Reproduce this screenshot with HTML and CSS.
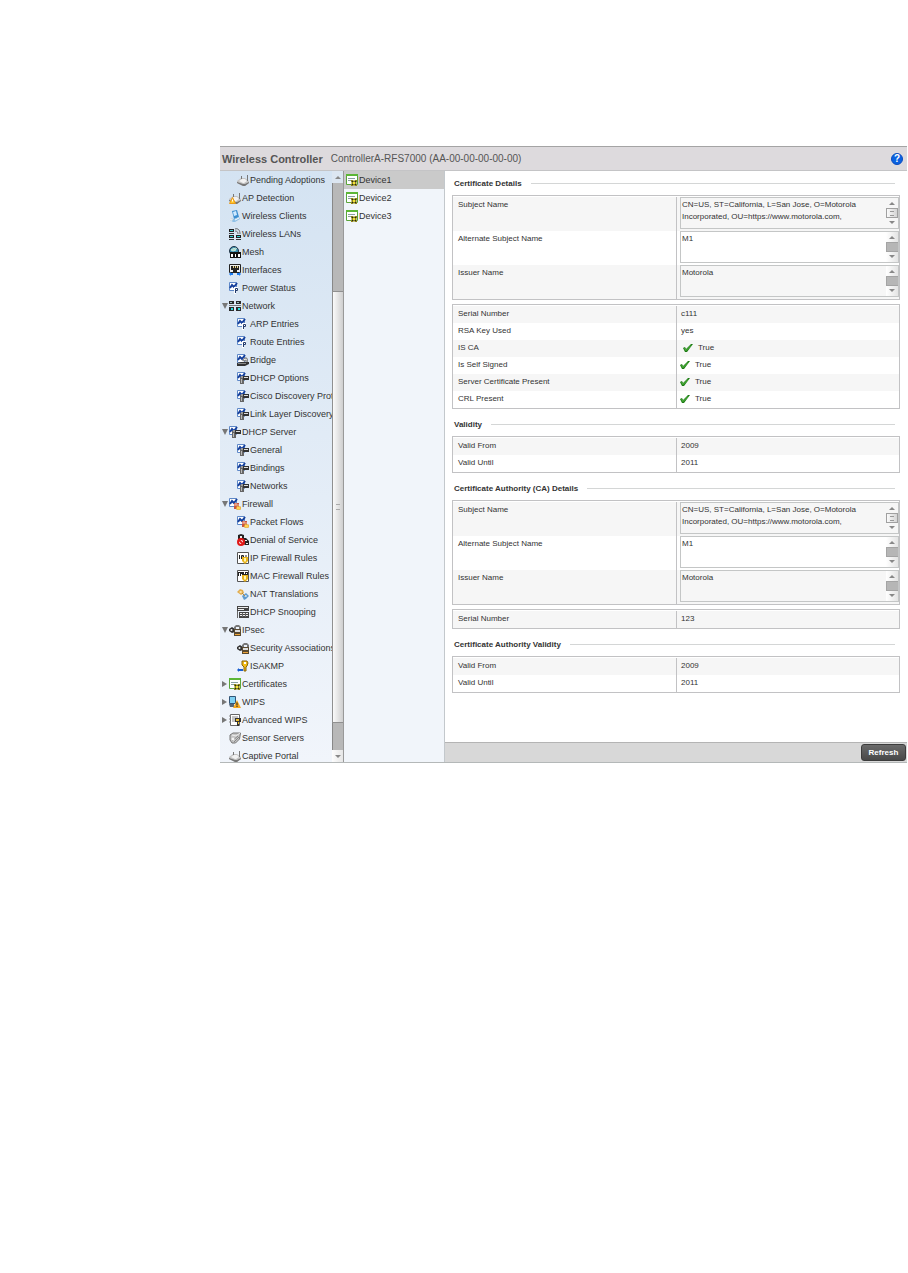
FILE: index.html
```html
<!DOCTYPE html>
<html lang="en">
<head>
    <meta charset="UTF-8">
    <meta name="viewport" content="width=device-width, initial-scale=1.0">
    <title>Wireless Controller</title>
    <link rel="stylesheet" href="styles.css">
</head>
<body>

    <svg class="sprite" aria-hidden="true">
        <symbol id="ap" viewBox="0 0 12 12">
            <path d="M0 7l4-3h4l4 3v2l-4 3H6L0 9z" fill="#c4c4c4"/>
            <path d="M0 9l6 3h2l4-3v-1l-4 2H6L0 8z" fill="#777"/>
            <path d="M2 7l3-2h3l2 2-3 2H6z" fill="#f2f2f2"/>
            <path d="M4.500 2v3M10.500 1v6" stroke="#777"/>
        </symbol>
        <symbol id="ap-warn" viewBox="0 0 12 12">
            <use href="#ap"/>
            <path d="M3.500 5.500L6.500 11.500H.500z" fill="#ffc62b" stroke="#ea9a1c"/>
            <path d="M3.500 7.500v2" stroke="#fff"/>
        </symbol>
        <symbol id="client" viewBox="0 0 12 12">
            <path d="M3 1l5-1 2 7-5 2z" fill="#3d8fd0"/>
            <path d="M4 2l3-1 1 4-3 1z" fill="#cfeaff"/>
            <path d="M1 8l4 1 5-2 1 2-5 3H4L1 10z" fill="#8fc0e6"/>
            <path d="M1 8l3 1-1 2-2-1z" fill="#e8e8e8"/>
            <path d="M6 10l4-2" stroke="#fff"/>
        </symbol>
        <symbol id="wlan" viewBox="0 0 12 12">
            <path d="M0 1h5v3H0zM0 7h5v3H0zM7 7h5v3H7z" fill="#222"/>
            <path d="M1 2h3v1H1zM1 8h3v1H1zM8 8h3v1H8z" fill="#2fd3d3"/>
            <path d="M0 5.500h5M0 11.500h5M7 11.500h5" stroke="#333"/>
            <path d="M6 1c3-1 5 1 5 5M6 3c2 0 3 1 3 3" fill="none" stroke="#666"/>
        </symbol>
        <symbol id="mesh" viewBox="0 0 12 12">
            <circle cx="5" cy="5" r="4.500" fill="#3a8fb0" stroke="#234"/>
            <path d="M2 4l3-2 2 2-3 1zM6 2l2 1" fill="#a8dccc" stroke="#c6e6d8"/>
            <path d="M1 6h11v6H1z" fill="#111"/>
            <path d="M2 8h2v3H2zM6 8h1v3H6zM9 8h2v3H9z" fill="#fff"/>
        </symbol>
        <symbol id="iface" viewBox="0 0 12 12">
            <path d="M.500.500h11v8H.500z" fill="#eee" stroke="#222"/>
            <path d="M2 2h8v4H8v2H4V6H2z" fill="#222"/>
            <path d="M4 2h1v2H4zM6 2h1v2H6zM8 2h1v2H8z" fill="#e8d48a"/>
            <path d="M0 10l2-2v1h2v2H2v1zM12 10l-2-2v1H8v2h2v1z" fill="#1a7af0"/>
        </symbol>
        <symbol id="chart" viewBox="0 0 12 12">
            <path d="M.500.500h7v8h-7z" fill="#fff" stroke="#5e88c8"/>
            <path d="M1 6l2-3 2 2 3-4" fill="none" stroke="#16409c" stroke-width="2"/>
        </symbol>
        <symbol id="chart-p" viewBox="0 0 12 12">
            <use href="#chart"/>
            <path d="M5 5h4v4H7v3H5z" fill="#fff"/>
            <path d="M6.500 11V6.500h2v2h-2" fill="none" stroke="#223a6a"/>
        </symbol>
        <symbol id="chart-plug" viewBox="0 0 12 12">
            <use href="#chart"/>
            <path d="M3 5h4v7H3z" fill="#666"/>
            <path d="M4 4h3v2H4z" fill="#999"/>
            <path d="M6 4h6v4H6z" fill="#333"/>
            <path d="M7 5.500h4" stroke="#ddd"/>
            <path d="M4.500 7v4" stroke="#bbb"/>
        </symbol>
        <symbol id="network" viewBox="0 0 12 12">
            <path d="M0 1h5v3H0zM7 1h5v3H7zM0 7h5v4H0zM7 7h5v4H7z" fill="#2a2a2a"/>
            <path d="M1 2h2v1H1zM8 2h2v1H8z" fill="#9bb"/>
            <path d="M2 8h2v2H2zM9 8h2v2H9z" fill="#27e0e0"/>
            <path d="M0 5.500h12" stroke="#777"/>
        </symbol>
        <symbol id="bridge" viewBox="0 0 12 12">
            <use href="#chart"/>
            <path d="M5 7l2-3 2-1 2 2v3z" fill="#888"/>
            <path d="M7 6l1-1 2 1" fill="none" stroke="#eee"/>
            <path d="M0 9l4-1h8v2l-4 2H0z" fill="#333"/>
            <path d="M1 9.500h8" stroke="#888"/>
        </symbol>
        <symbol id="chart-fire" viewBox="0 0 12 12">
            <use href="#chart"/>
            <path d="M5 5h5v6H5z" fill="#c9543f"/>
            <path d="M5 7h5M7 5v2" stroke="#f3c1ad"/>
            <path d="M8 8l4 1v2l-2 1-3-1z" fill="#ffd257" stroke="#d48a1c" stroke-width=".500"/>
        </symbol>
        <symbol id="denial" viewBox="0 0 12 12">
            <path d="M1 1l3-1 3 1v3h2l3 3v4H8L1 5z" fill="#222"/>
            <path d="M3 2h2v2H3zM8 6h2v1H8zM9 9h2v1H9z" fill="#eee"/>
            <circle cx="4" cy="8" r="3" fill="#fff" stroke="#e01818" stroke-width="2"/>
            <path d="M2 6l4 4" stroke="#e01818" stroke-width="2"/>
        </symbol>
        <symbol id="iprules" viewBox="0 0 12 12">
            <path d="M.500.500h11v11H.500z" fill="#fff" stroke="#555"/>
            <path d="M2.500 3v4M4.500 7V3.500h2V5h-2M8 4h2" fill="none" stroke="#222"/>
            <path d="M5 5h6v4l-3 3-3-3z" fill="#e8b41c"/>
            <path d="M7 6h2v3l-1 1-1-1z" fill="#fff3b0"/>
        </symbol>
        <symbol id="macrules" viewBox="0 0 12 12">
            <path d="M.500.500h11v11H.500z" fill="#fff" stroke="#555"/>
            <path d="M1 2h10v4H1z" fill="#222"/>
            <path d="M2.500 3v3M4.500 4v2M7.500 2v2M9.500 3v1" stroke="#fff"/>
            <path d="M5 5h6v4l-3 3-3-3z" fill="#e8b41c"/>
            <path d="M7 6h2v3l-1 1-1-1z" fill="#fff3b0"/>
        </symbol>
        <symbol id="nat" viewBox="0 0 12 12">
            <path d="M0 4l3-3 3 1 1 3-3 2z" fill="#e2ad4e"/>
            <path d="M2 4l2-1 1 1-1 1z" fill="#fff0c8"/>
            <path d="M5 8l4-3 3 3-3 3-2 1z" fill="#5f9bcf"/>
            <path d="M7 8l2-1 1 1-1 1z" fill="#e0f0ff"/>
            <path d="M5 5l3 3" stroke="#b98a3d"/>
        </symbol>
        <symbol id="snoop" viewBox="0 0 12 12">
            <path d="M0 0h12v5H0zM2 6h10v6H2z" fill="#444"/>
            <path d="M1 1.500h10M1 3.500h6M3 7.500h8M3 9.500h8" stroke="#eee"/>
            <path d="M5.500 7v4M8.500 7v4M.500 5v7" stroke="#666"/>
        </symbol>
        <symbol id="ipsec" viewBox="0 0 12 12">
            <path d="M0 5l3-2 3 2v3l-3 1-3-2z" fill="#333"/>
            <circle cx="2.500" cy="6" r="1" fill="#eee"/>
            <path d="M5 6V3l2-2h3l2 2v3h-2V3H7v3z" fill="#777"/>
            <path d="M5 5h7v7H5z" fill="#5a4a30"/>
            <path d="M6 6h5v2H6z" fill="#ddd"/>
            <path d="M6 10.500h5" stroke="#eda43a"/>
        </symbol>
        <symbol id="key" viewBox="0 0 12 12">
            <path d="M5 1h5l1 2-1 3-1 1v4H7V7L5 5z" fill="#f2bd18" stroke="#8b6508"/>
            <path d="M7 2h2v2H7z" fill="#fff"/>
            <path d="M0 10l2-2v1h4v2H2v1z" fill="#1a5fd0"/>
        </symbol>
        <symbol id="cert" viewBox="0 0 12 12">
            <path d="M.500.500h11v10H.500z" fill="#fff" stroke="#5aa53a"/>
            <path d="M0 1h12" stroke="#5cb636" stroke-width="2"/>
            <path d="M2 4.500h7M2 6.500h5" stroke="#8aa0a0"/>
            <path d="M5 6h2l1 1 1-1h2v2l-1 1 1 1v2H9l-1-1-1 1H5v-2l1-1-1-1z" fill="#8c8418"/>
            <path d="M6 7l4 4M10 7l-4 4" stroke="#222"/>
            <path d="M7 8h2v2H7z" fill="#f2e23a"/>
        </symbol>
        <symbol id="wips" viewBox="0 0 12 12">
            <path d="M.500.500h6v7h-6z" fill="#7fd0f2" stroke="#357"/>
            <path d="M0 8h5v3H1z" fill="#567"/>
            <path d="M8 4l4 8H4z" fill="#f5a81c"/>
            <path d="M8 6.500v3M8 10v1" stroke="#222"/>
        </symbol>
        <symbol id="awips" viewBox="0 0 12 12">
            <path d="M1.500.500h9v11h-9z" fill="#fff" stroke="#666"/>
            <path d="M3 3h6M3 5h3M3 7h3M0 2h2M0 5h2M0 8h2" stroke="#888"/>
            <path d="M6 4h6v4h-2v4H8V8H6z" fill="#333"/>
            <path d="M7 5h3v2H7zM9 8h1v2H9z" fill="#f0c02a"/>
        </symbol>
        <symbol id="sensor" viewBox="0 0 12 12">
            <path d="M1 3l3-2h7.500l-1 6-4 4H3L1 8z" fill="#c4c4c4" stroke="#777"/>
            <path d="M3 3l4 1 4-3" fill="none" stroke="#eee"/>
            <path d="M3 9l6-5M5 10l5-5" fill="none" stroke="#888"/>
            <circle cx="4" cy="7" r="1.500" fill="#f4f4f4"/>
        </symbol>
        <symbol id="tick" viewBox="0 0 10 10">
            <path d="M0 5l2-1 1 2 5-5h2L4 9H2z" fill="#1c7a14"/>
            <path d="M1.500 5.500L3 7.500 8 2.500" fill="none" stroke="#5cc247"/>
        </symbol>
    </svg>

    <div class="window">
        <header class="titlebar">
            <h1>Wireless Controller</h1>
            <span class="device-id">ControllerA-RFS7000 (AA-00-00-00-00-00)</span>
            <button class="help" aria-label="Help">?</button>
        </header>

        <div class="panels">
            <nav class="tree">
                <ul>
                    <li class="sub"><a href="#"><svg><use href="#ap"/></svg>Pending Adoptions</a></li>
                    <li><a href="#"><svg><use href="#ap-warn"/></svg>AP Detection</a></li>
                    <li><a href="#"><svg><use href="#client"/></svg>Wireless Clients</a></li>
                    <li><a href="#"><svg><use href="#wlan"/></svg>Wireless LANs</a></li>
                    <li><a href="#"><svg><use href="#mesh"/></svg>Mesh</a></li>
                    <li><a href="#"><svg><use href="#iface"/></svg>Interfaces</a></li>
                    <li><a href="#"><svg><use href="#chart-p"/></svg>Power Status</a></li>
                    <li class="open"><a href="#"><svg><use href="#network"/></svg>Network</a></li>
                    <li class="sub"><a href="#"><svg><use href="#chart-p"/></svg>ARP Entries</a></li>
                    <li class="sub"><a href="#"><svg><use href="#chart-p"/></svg>Route Entries</a></li>
                    <li class="sub"><a href="#"><svg><use href="#bridge"/></svg>Bridge</a></li>
                    <li class="sub"><a href="#"><svg><use href="#chart-plug"/></svg>DHCP Options</a></li>
                    <li class="sub"><a href="#"><svg><use href="#chart-plug"/></svg>Cisco Discovery Protocol</a></li>
                    <li class="sub"><a href="#"><svg><use href="#chart-plug"/></svg>Link Layer Discovery</a></li>
                    <li class="open"><a href="#"><svg><use href="#chart-plug"/></svg>DHCP Server</a></li>
                    <li class="sub"><a href="#"><svg><use href="#chart-plug"/></svg>General</a></li>
                    <li class="sub"><a href="#"><svg><use href="#chart-plug"/></svg>Bindings</a></li>
                    <li class="sub"><a href="#"><svg><use href="#chart-plug"/></svg>Networks</a></li>
                    <li class="open"><a href="#"><svg><use href="#chart-fire"/></svg>Firewall</a></li>
                    <li class="sub"><a href="#"><svg><use href="#chart-fire"/></svg>Packet Flows</a></li>
                    <li class="sub"><a href="#"><svg><use href="#denial"/></svg>Denial of Service</a></li>
                    <li class="sub"><a href="#"><svg><use href="#iprules"/></svg>IP Firewall Rules</a></li>
                    <li class="sub"><a href="#"><svg><use href="#macrules"/></svg>MAC Firewall Rules</a></li>
                    <li class="sub"><a href="#"><svg><use href="#nat"/></svg>NAT Translations</a></li>
                    <li class="sub"><a href="#"><svg><use href="#snoop"/></svg>DHCP Snooping</a></li>
                    <li class="open"><a href="#"><svg><use href="#ipsec"/></svg>IPsec</a></li>
                    <li class="sub"><a href="#"><svg><use href="#ipsec"/></svg>Security Associations</a></li>
                    <li class="sub"><a href="#"><svg><use href="#key"/></svg>ISAKMP</a></li>
                    <li class="closed"><a href="#"><svg><use href="#cert"/></svg>Certificates</a></li>
                    <li class="closed"><a href="#"><svg><use href="#wips"/></svg>WIPS</a></li>
                    <li class="closed"><a href="#"><svg><use href="#awips"/></svg>Advanced WIPS</a></li>
                    <li><a href="#"><svg><use href="#sensor"/></svg>Sensor Servers</a></li>
                    <li><a href="#"><svg><use href="#ap"/></svg>Captive Portal</a></li>
                </ul>
            </nav>

            <div class="tree-scroll" aria-hidden="true">
                <i class="arrow up"></i>
                <i class="track"></i>
                <i class="thumb"></i>
                <i class="track end"></i>
                <i class="arrow down"></i>
            </div>

            <ul class="devices">
                <li class="selected"><a href="#"><svg><use href="#cert"/></svg>Device1</a></li>
                <li><a href="#"><svg><use href="#cert"/></svg>Device2</a></li>
                <li><a href="#"><svg><use href="#cert"/></svg>Device3</a></li>
            </ul>

            <main class="details">
                <div class="content">
                    <h2>Certificate Details</h2>
                    <table class="names">
                        <tr>
                            <th><label for="subject">Subject Name</label></th>
                            <td><div class="box"><textarea id="subject" readonly spellcheck="false">CN=US, ST=California, L=San Jose, O=Motorola
Incorporated, OU=https://www.motorola.com,</textarea><div class="bar active"><i class="up"></i><i class="mid"></i><i class="down"></i></div></div></td>
                        </tr>
                        <tr>
                            <th><label for="alt">Alternate Subject Name</label></th>
                            <td><div class="box"><textarea id="alt" readonly spellcheck="false">M1</textarea><div class="bar"><i class="up"></i><i class="mid"></i><i class="down"></i></div></div></td>
                        </tr>
                        <tr>
                            <th><label for="issuer">Issuer Name</label></th>
                            <td><div class="box"><textarea id="issuer" readonly spellcheck="false">Motorola</textarea><div class="bar"><i class="up"></i><i class="mid"></i><i class="down"></i></div></div></td>
                        </tr>
                    </table>
                    <table>
                        <tr><th>Serial Number</th><td>c111</td></tr>
                        <tr><th>RSA Key Used</th><td>yes</td></tr>
                        <tr><th>IS CA</th><td class="flag indent"><svg><use href="#tick"/></svg>True</td></tr>
                        <tr><th>Is Self Signed</th><td class="flag"><svg><use href="#tick"/></svg>True</td></tr>
                        <tr><th>Server Certificate Present</th><td class="flag"><svg><use href="#tick"/></svg>True</td></tr>
                        <tr><th>CRL Present</th><td class="flag"><svg><use href="#tick"/></svg>True</td></tr>
                    </table>

                    <h2>Validity</h2>
                    <table>
                        <tr><th>Valid From</th><td>2009</td></tr>
                        <tr><th>Valid Until</th><td>2011</td></tr>
                    </table>

                    <h2>Certificate Authority (CA) Details</h2>
                    <table class="names">
                        <tr>
                            <th><label for="ca-subject">Subject Name</label></th>
                            <td><div class="box"><textarea id="ca-subject" readonly spellcheck="false">CN=US, ST=California, L=San Jose, O=Motorola
Incorporated, OU=https://www.motorola.com,</textarea><div class="bar active"><i class="up"></i><i class="mid"></i><i class="down"></i></div></div></td>
                        </tr>
                        <tr>
                            <th><label for="ca-alt">Alternate Subject Name</label></th>
                            <td><div class="box"><textarea id="ca-alt" readonly spellcheck="false">M1</textarea><div class="bar"><i class="up"></i><i class="mid"></i><i class="down"></i></div></div></td>
                        </tr>
                        <tr>
                            <th><label for="ca-issuer">Issuer Name</label></th>
                            <td><div class="box"><textarea id="ca-issuer" readonly spellcheck="false">Motorola</textarea><div class="bar"><i class="up"></i><i class="mid"></i><i class="down"></i></div></div></td>
                        </tr>
                    </table>
                    <table>
                        <tr><th>Serial Number</th><td>123</td></tr>
                    </table>

                    <h2>Certificate Authority Validity</h2>
                    <table>
                        <tr><th>Valid From</th><td>2009</td></tr>
                        <tr><th>Valid Until</th><td>2011</td></tr>
                    </table>
                </div>

                <footer class="actions">
                    <button class="refresh">Refresh</button>
                </footer>
            </main>
        </div>
    </div>

</body>
</html>
```
FILE: styles.css
```css
* {
    box-sizing: border-box;
}

body {
    margin: 0;
    background: #fff;
    color: #333;
    font-family: "Liberation Sans", Arial, sans-serif;
    font-size: 9px;
}

ul {
    list-style: none;
    margin: 0;
    padding: 0;
}

a {
    color: inherit;
    text-decoration: none;
}

.sprite {
    display: none;
}

.window {
    margin: 146px 1px 0 220px;
    border-bottom: 1px solid #b4b8b8;
}

/* title bar */
.titlebar {
    display: flex;
    align-items: center;
    height: 25px;
    padding: 0 4px 0 2px;
    background: #dddadd;
    border-top: 1px solid #a4a4a4;
    border-bottom: 1px solid #c4c4c6;
}

.titlebar h1 {
    margin: 0 8px 0 0;
    font-size: 11px;
    color: #555;
}

.device-id {
    flex: 1;
    font-size: 10px;
    color: #555;
}

.help {
    width: 12px;
    height: 12px;
    padding: 0;
    border: 1px solid #0a4bc0;
    border-radius: 50%;
    background: #0b62e0;
    color: #fff;
    font: bold 10px/10px "Liberation Sans", Arial, sans-serif;
}

.panels {
    display: flex;
}

/* navigation tree */
.tree {
    width: 112px;
    overflow: hidden;
    contain: size;
    background: linear-gradient(#d4e3f2, #f1f5fb);
}

.tree li {
    display: flex;
    align-items: center;
    height: 18px;
    padding-left: 9px;
}

.tree li.sub {
    padding-left: 17px;
}

.tree li.open,
.tree li.closed {
    padding-left: 2px;
}

.tree li.open::before,
.tree li.closed::before {
    content: '';
    margin-right: 1px;
    border: 3px solid transparent;
}

.tree li.open::before {
    border-top: 6px solid #777;
    border-bottom: 0;
}

.tree li.closed::before {
    border-left: 5px solid #777;
    border-right: 0;
    margin-right: 2px;
}

.tree a,
.devices a {
    display: flex;
    align-items: center;
    gap: 1px;
    white-space: nowrap;
}

.tree svg,
.devices svg {
    flex: none;
    width: 12px;
    height: 12px;
}

.tree-scroll {
    display: flex;
    flex-direction: column;
    width: 12px;
    border-right: 1px solid #999;
}

.arrow {
    display: flex;
    align-items: center;
    justify-content: center;
    height: 12px;
    background: linear-gradient(90deg, #fdfdfd, #e6e6e6);
}

.arrow.up {
    background: #dce6f1;
}

.up::before,
.down::before {
    content: '';
    border: 3px solid transparent;
}

.up::before {
    border-top: 0;
    border-bottom: 3px solid #888;
}

.down::before {
    border-bottom: 0;
    border-top: 3px solid #888;
}

.track {
    flex: 108;
    background: #b8b8b8;
    border-left: 1px solid #888;
}

.track.end {
    flex: 27;
}

.thumb {
    display: flex;
    align-items: center;
    justify-content: center;
    flex: 432;
    background: linear-gradient(90deg, #fafafa, #cfcfcf);
    border: 1px solid #909090;
    border-right: 0;
}

.thumb::before {
    content: '';
    width: 4px;
    height: 4px;
    border: 1px solid #aaa;
    border-width: 1px 0;
}

/* device list */
.devices {
    width: 101px;
    background: #f1f5fa;
    border-right: 1px solid #c3c8cc;
}

.devices li {
    display: flex;
    align-items: center;
    height: 18px;
    padding-left: 2px;
}

.devices .selected {
    background: #cacaca;
}

/* details */
.details {
    flex: 1;
    min-width: 0;
    background: #fff;
}

.content {
    padding: 4px 7px 49px;
}

.details h2 {
    display: flex;
    align-items: center;
    gap: 9px;
    height: 16px;
    margin: 7px 5px 4px 2px;
    font-size: 8px;
    color: #333;
}

.details h2:first-child {
    margin-top: 0;
}

.details h2::after {
    content: '';
    flex: 1;
    height: 1px;
    background: #d4d6d6;
}

table {
    width: 100%;
    padding-top: 1px;
    table-layout: fixed;
    border: 1px solid #c2c2c4;
    border-collapse: separate;
    border-spacing: 0;
    font-size: 8px;
}

table + table {
    margin-top: 4px;
}

tr:nth-child(odd) {
    background: #f6f6f6;
}

th,
td {
    height: 17px;
    padding: 0 5px;
    line-height: 16px;
    font-weight: normal;
    text-align: left;
    vertical-align: top;
}

td {
    padding: 0 0 0 4px;
    border-left: 1px solid #c2c2c4;
}

.names th,
.names td {
    height: 34px;
}

.names td {
    padding-left: 3px;
}

.flag svg {
    width: 10px;
    height: 10px;
    margin-right: 5px;
    vertical-align: middle;
}

.flag {
    padding-left: 3px;
}

.flag.indent {
    padding-left: 6px;
}

.box {
    display: flex;
    height: 32px;
    border: 1px solid #c4c6c6;
}

.box textarea {
    flex: 1;
    min-width: 0;
    margin: 0;
    padding: 1px 1px 0;
    border: 0;
    outline: 0;
    resize: none;
    overflow: hidden;
    background: transparent;
    color: #333;
    font: 8px/12px "Liberation Sans", Arial, sans-serif;
}

.bar {
    display: flex;
    flex-direction: column;
    width: 12px;
}

.bar i {
    display: flex;
    align-items: center;
    justify-content: center;
    flex: 11;
    background: linear-gradient(90deg, #fff, #e4e4e4);
}

.bar .mid {
    flex: 8;
    background: #b6b6b6;
    border: 1px solid #a4a4a4;
    border-right: 0;
}

.bar.active i {
    background: none;
}

.bar.active .mid {
    background: linear-gradient(90deg, #fafafa, #d4d4d4);
    border: 1px solid #a0a0a0;
}

.bar.active .mid::before {
    content: '';
    width: 4px;
    height: 3px;
    border: 1px solid #999;
    border-width: 1px 0;
}

.actions {
    display: flex;
    justify-content: flex-end;
    padding: 1px;
    background: #d8d8d8;
    border-top: 1px solid #b4b4b4;
}

.refresh {
    width: 45px;
    height: 17px;
    padding: 0;
    border: 1px solid #3c3c3c;
    border-radius: 3px;
    background: linear-gradient(#6a6a6a, #484848);
    color: #fff;
    font: bold 8px/12px "Liberation Sans", Arial, sans-serif;
}
```
